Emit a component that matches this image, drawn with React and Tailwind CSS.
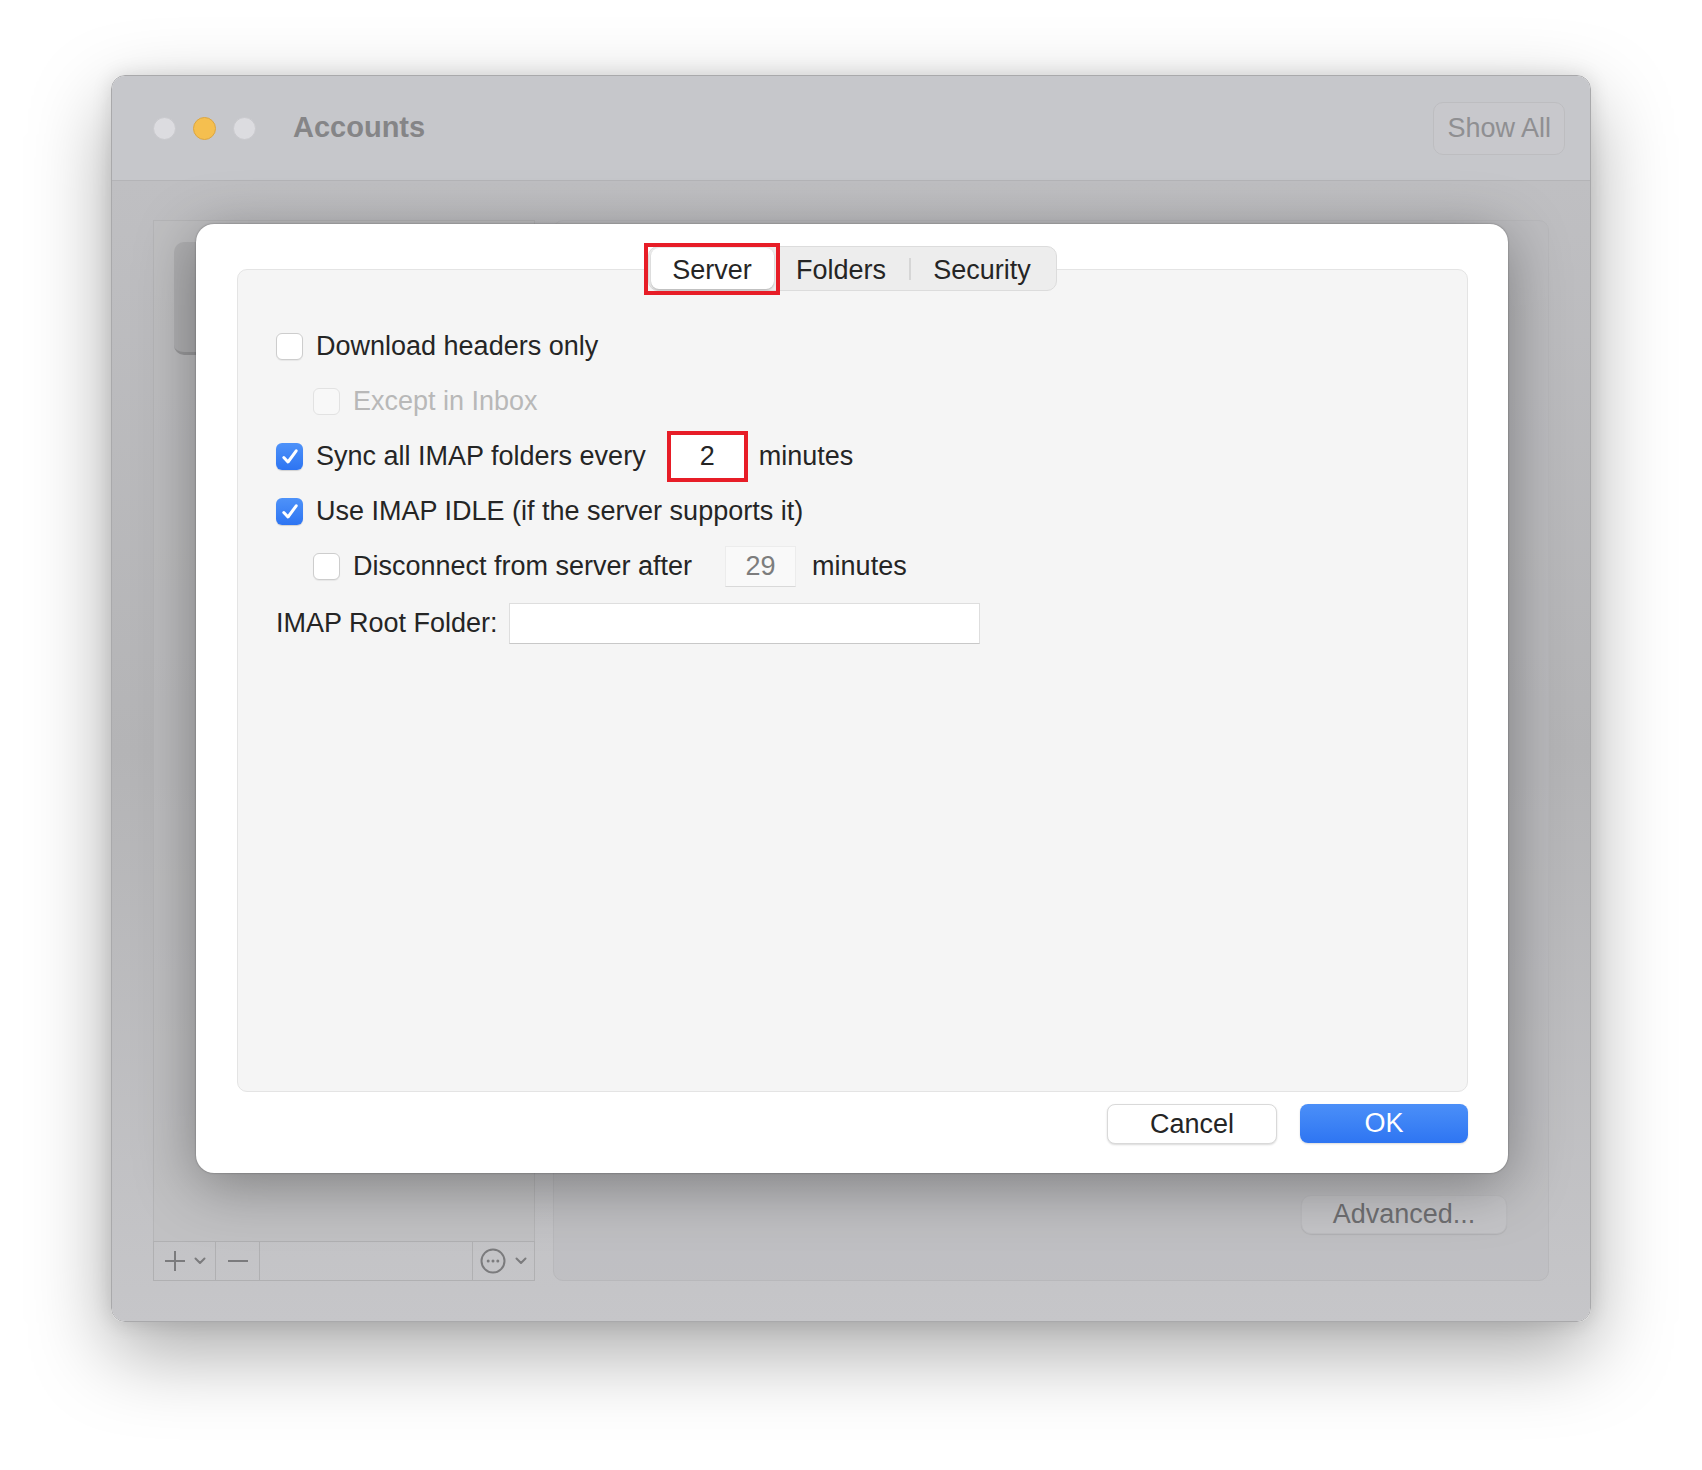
import React from 'react'

const Check = ({ checked, disabled }) => (
  <span
    className={`w-[27px] h-[27px] shrink-0 rounded-[6px] flex items-center justify-center ${
      checked
        ? 'bg-gradient-to-b from-[#4e92f9] to-[#2d74f2] shadow-[0_1px_1px_rgba(0,0,0,0.15)]'
        : disabled
        ? 'bg-[#f8f8f8] border border-[#e2e2e2]'
        : 'bg-white border border-[#cdcdcd] shadow-[0_1px_1px_rgba(0,0,0,0.06)]'
    }`}
  >
    {checked && (
      <svg width="20" height="20" viewBox="0 0 20 20" fill="none">
        <path d="M3.8 10.5 L8 15 L16.2 3.8" stroke="white" strokeWidth="3" strokeLinecap="round" strokeLinejoin="round" />
      </svg>
    )}
  </span>
)

const Row = ({ children, indent }) => (
  <div className={`h-[55px] flex items-center ${indent ? 'pl-[37px]' : ''}`}>{children}</div>
)

const Chevron = () => (
  <svg width="12" height="8" viewBox="0 0 12 8" fill="none">
    <path d="M1.5 1.5 L6 6 L10.5 1.5" stroke="#7b7b7d" strokeWidth="2" strokeLinecap="round" strokeLinejoin="round" />
  </svg>
)

export default function App() {
  return (
    <div className="w-[1702px] h-[1470px] bg-white pl-[111px] pt-[75px] font-['Liberation_Sans',Arial,sans-serif] text-[#252525]">
      {/* Window */}
      <div className="relative w-[1480px] h-[1247px] rounded-[14px] overflow-hidden flex flex-col border border-[#a9a9ab] shadow-[0_30px_80px_rgba(0,0,0,0.34),0_0_20px_rgba(0,0,0,0.12)]">
        {/* Title bar */}
        <div className="h-[105px] shrink-0 bg-[#c6c7cb] border-b border-[#b4b4b7] flex items-center pl-[41px] pr-[25px]">
          <div className="flex gap-[17px]">
            <span className="w-[23px] h-[23px] rounded-full bg-[#dcdce0] border border-[#c9c9cd]" />
            <span className="w-[23px] h-[23px] rounded-full bg-[#f5bf4f] border border-[#dca640]" />
            <span className="w-[23px] h-[23px] rounded-full bg-[#dcdce0] border border-[#c9c9cd]" />
          </div>
          <div className="ml-[37px] text-[29px] font-bold text-[#858587]">Accounts</div>
          <div className="ml-auto h-[53px] px-[13px] flex items-center rounded-[10px] border border-[#bdbdc0] bg-[#c8c8cc] text-[27px] text-[#8f8f92]">
            Show All
          </div>
        </div>

        {/* Body */}
        <div className="flex-1 bg-gradient-to-b from-[#bfbfc2] via-[#b4b4b6] to-[#c6c6c9] px-[41px] pt-[39px] pb-[40px] flex gap-[18px]">
          {/* Sidebar */}
          <div className="w-[382px] flex flex-col">
            <div className="flex-1 bg-[#c0c0c2]/60 border border-[#b5b5b7] border-b-0 pt-[21px] pl-[20px]">
              <div className="w-[300px] h-[113px] rounded-[10px] bg-[#b0b0b2] border-b-[3px] border-[#9a9a9c]" />
            </div>
            <div className="h-[40px] flex border border-[#b0b0b2]">
              <div className="w-[62px] flex items-center justify-center gap-[8px] border-r border-[#b0b0b2]">
                <svg width="22" height="22" viewBox="0 0 22 22" fill="none">
                  <path d="M11 1 V21 M1 11 H21" stroke="#7b7b7d" strokeWidth="2" />
                </svg>
                <Chevron />
              </div>
              <div className="w-[44px] flex items-center justify-center border-r border-[#b0b0b2]">
                <svg width="22" height="4" viewBox="0 0 22 4" fill="none">
                  <path d="M1 2 H21" stroke="#7b7b7d" strokeWidth="2" />
                </svg>
              </div>
              <div className="flex-1" />
              <div className="w-[62px] flex items-center justify-center gap-[9px] border-l border-[#b0b0b2]">
                <svg width="26" height="26" viewBox="0 0 26 26" fill="none">
                  <circle cx="13" cy="13" r="11.5" stroke="#7b7b7d" strokeWidth="2" />
                  <circle cx="8.2" cy="13" r="1.5" fill="#7b7b7d" />
                  <circle cx="13" cy="13" r="1.5" fill="#7b7b7d" />
                  <circle cx="17.8" cy="13" r="1.5" fill="#7b7b7d" />
                </svg>
                <Chevron />
              </div>
            </div>
          </div>

          {/* Right panel */}
          <div className="flex-1 rounded-[10px] bg-[#bdbdc0]/60 border border-[#b8b8bb] flex flex-col justify-end items-end pr-[41px] pb-[46px]">
            <div className="w-[206px] h-[39px] rounded-[10px] bg-[#c4c4c7] border border-[#bcbcbf] shadow-[0_1px_1px_rgba(0,0,0,0.08)] flex items-center justify-center text-[27px] text-[#6f6f72]">
              Advanced...
            </div>
          </div>
        </div>

        {/* Sheet */}
        <div className="absolute left-[84px] top-[148px] w-[1312px] h-[949px] rounded-[18px] bg-white shadow-[0_12px_60px_rgba(0,0,0,0.35),0_0_2px_rgba(0,0,0,0.4)] pt-[45px] pl-[41px] pr-[40px] flex flex-col">
          <div className="h-[823px] rounded-[10px] bg-[#f5f5f5] border border-[#e4e4e4] flex flex-col">
            {/* Tabs */}
            <div className="flex justify-center -mt-[24px] pr-[1px]">
              <div className="h-[45px] flex items-center p-[2px] rounded-[10px] bg-[#ededed] border border-[#dcdcdc] text-[27px] leading-none">
                <div className="relative w-[123px] h-[41px] pt-[3px] rounded-[8px] bg-white shadow-[0_1px_2px_rgba(0,0,0,0.25)] flex items-center justify-center">
                  Server
                  <span className="absolute -left-[7px] -right-[6px] -top-[5px] -bottom-[6px] border-[4px] border-[#e71d27]" />
                </div>
                <div className="w-[135px] h-[41px] pt-[3px] flex items-center justify-center">Folders</div>
                <span className="w-[2px] h-[22px] bg-[#d6d6d6]" />
                <div className="w-[143px] h-[41px] pt-[3px] flex items-center justify-center">Security</div>
              </div>
            </div>

            {/* Content */}
            <div className="mt-[28px] pl-[38px] flex flex-col text-[27px]">
              <Row>
                <Check />
                <span className="ml-[13px]">Download headers only</span>
              </Row>
              <Row indent>
                <Check disabled />
                <span className="ml-[13px] text-[#b8b8b8]">Except in Inbox</span>
              </Row>
              <Row>
                <Check checked />
                <span className="ml-[13px]">Sync all IMAP folders every</span>
                <div className="ml-[21px] w-[81px] h-[51px] bg-white border-[4px] border-[#e71d27] flex items-center justify-center">
                  2
                </div>
                <span className="ml-[11px]">minutes</span>
              </Row>
              <Row>
                <Check checked />
                <span className="ml-[13px]">Use IMAP IDLE (if the server supports it)</span>
              </Row>
              <Row indent>
                <Check />
                <span className="ml-[13px]">Disconnect from server after</span>
                <div className="ml-[33px] w-[71px] h-[41px] bg-[#f9f9f9] border border-[#ececec] border-b-[#d9d9d9] flex items-center justify-center text-[#7d7d7d]">
                  29
                </div>
                <span className="ml-[16px]">minutes</span>
              </Row>
              <div className="h-[55px] mt-[2px] flex items-center">
                <span>IMAP Root Folder:</span>
                <div className="ml-[11px] w-[471px] h-[41px] bg-white border border-[#dedede] border-b-[#c8c8c8]" />
              </div>
            </div>
          </div>

          {/* Buttons */}
          <div className="mt-[12px] flex justify-end gap-[23px]">
            <div className="w-[170px] h-[40px] rounded-[8px] bg-white border border-[#d9d9d9] shadow-[0_1px_2px_rgba(0,0,0,0.15)] flex items-center justify-center text-[27px]">
              Cancel
            </div>
            <div className="w-[168px] h-[39px] rounded-[8px] bg-gradient-to-b from-[#4b8ff8] to-[#2e75f2] shadow-[0_1px_2px_rgba(0,0,0,0.15)] flex items-center justify-center text-[27px] text-white">
              OK
            </div>
          </div>
        </div>
      </div>
    </div>
  )
}
